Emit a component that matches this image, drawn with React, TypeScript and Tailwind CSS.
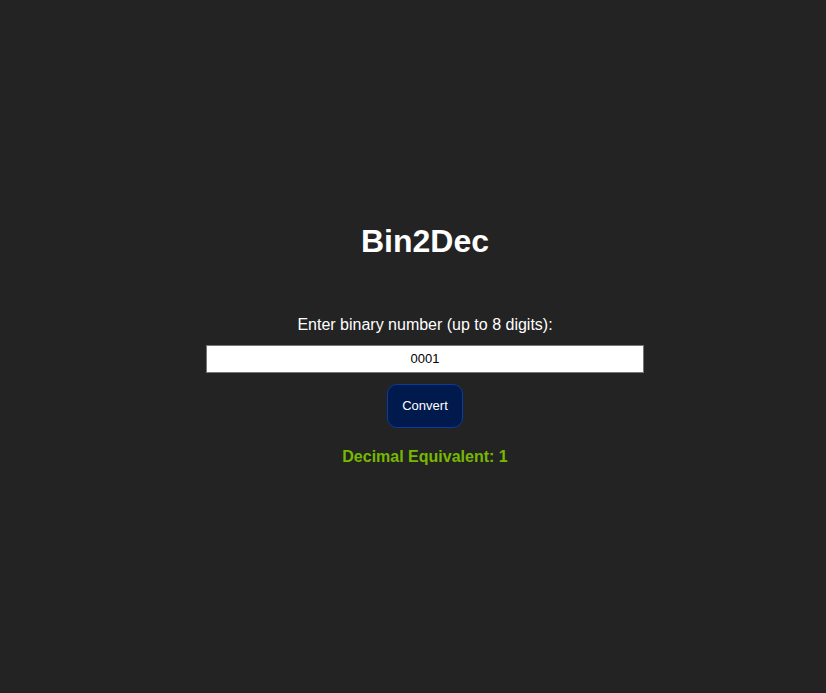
export default function App() {
  return (
    <div
      className="min-h-screen bg-[#232323] flex flex-col items-center justify-center pl-6 pb-[5px] text-white"
      style={{ fontFamily: '"Liberation Sans", Arial, sans-serif' }}
    >
      <h1 className="text-[32px] leading-[37px] font-bold">Bin2Dec</h1>
      <label className="mt-[56px] text-base leading-[18px]">Enter binary number (up to 8 digits):</label>
      <input
        type="text"
        defaultValue="0001"
        className="mt-[11px] w-[438px] h-[28px] bg-white border border-[#767676] text-black text-center text-[13px] outline-none"
      />
      <button className="mt-[11px] w-[76px] h-[44px] rounded-[10px] bg-[#001a4d] border border-[#0b3aa0] text-white text-[13px]">
        Convert
      </button>
      <p className="mt-[20px] text-base leading-[18px] font-bold text-[#76b900]">Decimal Equivalent: 1</p>
    </div>
  );
}
